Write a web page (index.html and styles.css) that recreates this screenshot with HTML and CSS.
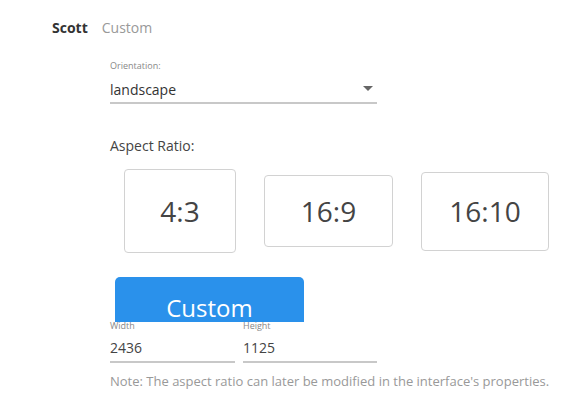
FILE: index.html
```html
<!DOCTYPE html>
<html lang="en">
  <head>
    <meta charset="UTF-8" />
    <meta name="viewport" content="width=device-width, initial-scale=1.0" />
    <title>Screen Size</title>
    <link rel="stylesheet" href="styles.css">
  </head>
  <body>
    <div class="tabs">
      <span class="tab active">Scott</span>
      <span class="tab">Custom</span>
    </div>

    <div class="form">
      <div class="field-label">Orientation:</div>
      <div class="select">
        <span>landscape</span>
        <span class="caret"></span>
      </div>

      <div class="section-title">Aspect Ratio:</div>
      <div class="ratios">
        <div class="ratio r43">4:3</div>
        <div class="ratio r169">16:9</div>
        <div class="ratio r1610">16:10</div>
      </div>

      <div class="custom-btn">Custom</div>

      <div class="sizes">
        <div class="size-field width">
          <div class="field-label small">Width</div>
          <div class="value">2436</div>
        </div>
        <div class="size-field height">
          <div class="field-label small">Height</div>
          <div class="value">1125</div>
        </div>
      </div>

      <div class="note">Note: The aspect ratio can later be modified in the interface's properties.</div>
    </div>
  </body>
</html>
```

FILE: styles.css
```css
body {
  margin: 0;
  background: #fff;
  font-family: "Open Sans", "Liberation Sans", sans-serif;
  color: #333;
}

.tabs {
  display: flex;
  gap: 14px;
  padding: 19px 0 0 52px;
  font-size: 14px;
  line-height: 18px;
}
.tab {
  color: #999;
}
.tab.active {
  color: #333;
  font-weight: bold;
}

.form {
  padding-left: 110px;
}

.field-label {
  margin-top: 23px;
  font-size: 9px;
  line-height: 12px;
  color: #888;
}

.select {
  display: flex;
  justify-content: space-between;
  width: 263px;
  margin-top: 8px;
  padding: 0 4px 2px 0;
  font-size: 14px;
  line-height: 20px;
  color: #333;
  border-bottom: 2px solid #c8c8c8;
}
.caret {
  width: 0;
  height: 0;
  margin-top: 6px;
  border-left: 5px solid transparent;
  border-right: 5px solid transparent;
  border-top: 5px solid #666;
}

.section-title {
  margin-top: 32px;
  font-size: 14px;
  line-height: 20px;
  color: #444;
}

.ratios {
  display: flex;
  align-items: center;
  margin-top: 13px;
  padding-left: 14px;
}
.ratio {
  display: flex;
  align-items: center;
  justify-content: center;
  box-sizing: border-box;
  border: 1px solid #d2d2d2;
  border-radius: 4px;
  font-size: 28px;
  color: #444;
}
.r43 {
  width: 112px;
  height: 84px;
}
.r169 {
  width: 129px;
  height: 72px;
  margin-left: 28px;
}
.r1610 {
  width: 128px;
  height: 79px;
  margin-left: 28px;
}

.custom-btn {
  box-sizing: border-box;
  width: 189px;
  height: 45px;
  margin: 24px 0 0 5px;
  padding-top: 17px;
  overflow: hidden;
  background: #2a91eb;
  border-radius: 5px 5px 0 0;
  color: #fff;
  font-size: 24px;
  line-height: 28px;
  text-align: center;
}

.sizes {
  display: flex;
  gap: 8px;
}
.size-field {
  border-bottom: 2px solid #c8c8c8;
  padding-bottom: 3px;
}
.size-field.width {
  width: 125px;
}
.size-field.height {
  width: 134px;
}
.field-label.small {
  margin-top: 0;
  line-height: 8px;
}
.value {
  margin-top: 8px;
  font-size: 14px;
  line-height: 20px;
  color: #444;
}

.note {
  margin-top: 10px;
  font-size: 13px;
  line-height: 17px;
  color: #999;
}
```
